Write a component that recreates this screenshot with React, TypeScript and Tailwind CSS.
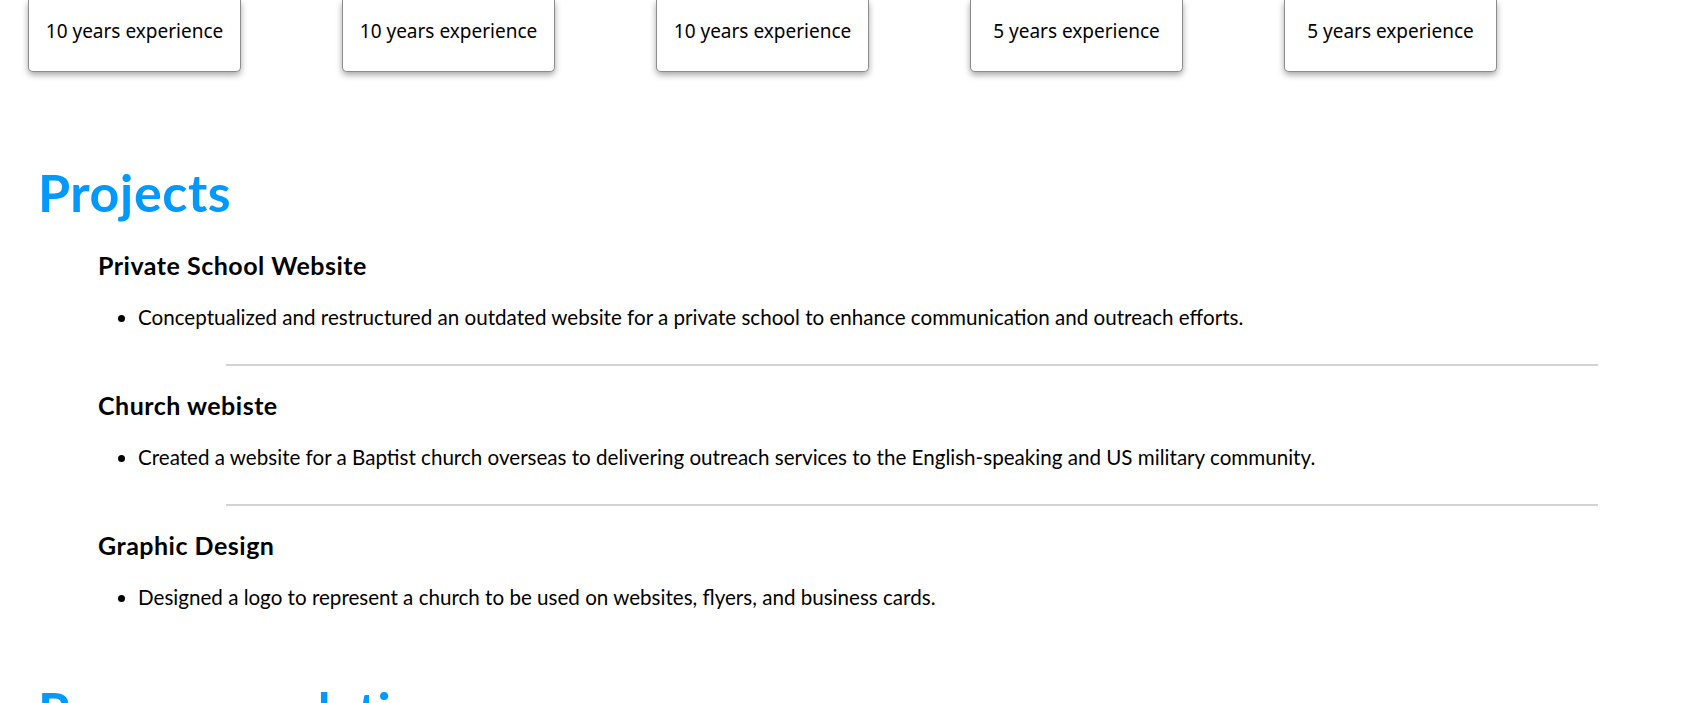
const skills = [
  "10 years experience",
  "10 years experience",
  "10 years experience",
  "5 years experience",
  "5 years experience",
];

const projects = [
  {
    title: "Private School Website",
    points: [
      "Conceptualized and restructured an outdated website for a private school to enhance communication and outreach efforts.",
    ],
  },
  {
    title: "Church webiste",
    points: [
      "Created a website for a Baptist church overseas to delivering outreach services to the English-speaking and US military community.",
    ],
  },
  {
    title: "Graphic Design",
    points: ["Designed a logo to represent a church to be used on websites, flyers, and business cards."],
  },
];

export default function App() {
  return (
    <div className="min-h-screen bg-white text-black overflow-hidden font-['Lato','Open_Sans',sans-serif]">
      {/* Skill cards (page is scrolled, tops are cut off) */}
      <div className="flex gap-[101px] pl-[28px]">
        {skills.map((s, i) => (
          <div
            key={i}
            className="w-[213px] h-[72px] flex items-end justify-center pb-[27px] bg-white border-x border-b border-[#8c8c8c] rounded-b-[5px] shadow-[0_3px_6px_rgba(0,0,0,0.35)] font-['Noto_Sans',sans-serif] text-[19px] leading-[26px]"
          >
            {s}
          </div>
        ))}
      </div>

      {/* Projects */}
      <h2 className="mt-[90px] pl-[38px] text-[52px] leading-[60px] tracking-[0.6px] font-bold text-[#0099ff]">Projects</h2>
      <div className="pl-[98px]">
        {projects.map((p, i) => (
          <div key={p.title}>
            {i > 0 && <hr className="ml-[128px] w-[1372px] border-0 h-[2px] bg-[#d3d3d3] mt-[33px] mb-[24px]" />}
            <h3 className={`${i === 0 ? "mt-[28px]" : ""} text-[25px] leading-[30px] tracking-[0.5px] font-bold`}>{p.title}</h3>
            <ul className="mt-[23px] list-disc pl-[40px] text-[20.6px] leading-[28px]">
              {p.points.map((pt) => (
                <li key={pt}>{pt}</li>
              ))}
            </ul>
          </div>
        ))}
      </div>

      <h2 className="mt-[69px] pl-[38px] text-[52px] leading-[60px] tracking-[0.6px] font-bold text-[#0099ff]">Recommendations</h2>
    </div>
  );
}
